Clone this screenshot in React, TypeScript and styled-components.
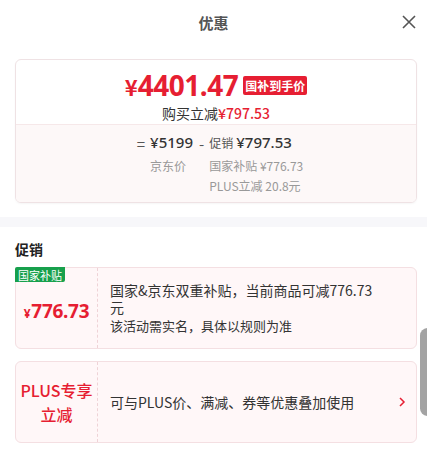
import styled, { createGlobalStyle } from 'styled-components';

const GlobalStyle = createGlobalStyle`
  body {
    margin: 0;
    background: #fff;
    font-family: 'Noto Sans CJK SC', 'Noto Sans', sans-serif;
    color: #333;
  }
`;

const RED = '#e61e32';

const Page = styled.div`
  position: relative;
  width: 427px;
  height: 454px;
  overflow: hidden;
  background: #fff;
`;

const Header = styled.div`
  display: grid;
  grid-template-columns: 1fr auto 1fr;
  align-items: center;
  height: 44px;
  margin-bottom: 15px;
`;

const Title = styled.div`
  grid-column: 2;
  font-size: 15px;
  font-weight: 700;
  color: #555;
`;

const CloseButton = styled.button`
  justify-self: end;
  margin-right: 10px;
  padding: 0;
  border: none;
  background: none;
  display: flex;
  color: #555;
`;

const PriceCard = styled.div`
  margin: 0 10px 0 15px;
  border: 1px solid #efe2e4;
  border-radius: 6px;
  overflow: hidden;
  box-shadow: 0 1px 2px rgba(0, 0, 0, 0.04);
`;

const PriceTop = styled.div`
  display: flex;
  flex-direction: column;
  align-items: center;
  height: 65px;
  padding-top: 7px;
  box-sizing: border-box;
  border-bottom: 1px solid #f6e8e9;
`;

const FinalPrice = styled.div`
  display: flex;
  align-items: center;
  gap: 5px;
  height: 36px;
  color: ${RED};
  font-weight: 700;
`;

const Yen = styled.span<{ $size: number }>`
  font-size: ${(p) => p.$size}px;
  font-weight: 700;
`;

const BigNumber = styled.span`
  font-family: 'Noto Sans', sans-serif;
  font-size: 28px;
  letter-spacing: -0.5px;
`;

const Badge = styled.span<{ $color: string }>`
  display: inline-flex;
  align-items: center;
  padding: 0 2px;
  height: 19px;
  border-radius: 2px;
  background: ${(p) => p.$color};
  color: #fff;
  font-size: 12px;
  font-weight: 700;
`;

const Saved = styled.div`
  font-size: 14px;
  line-height: 20px;
  color: #333;

  b {
    color: ${RED};
    font-weight: 500;
  }
`;

const Breakdown = styled.div`
  display: flex;
  justify-content: center;
  gap: 6px;
  height: 77px;
  padding: 7px 0 0 8px;
  box-sizing: border-box;
  background: #fdf8f8;
`;

const Term = styled.div`
  display: flex;
  gap: 5px;
`;

const Operator = styled.span`
  font-size: 15px;
  line-height: 24px;
  color: #555;
`;

const TermBody = styled.div`
  display: flex;
  flex-direction: column;
`;

const Amount = styled.div`
  display: flex;
  align-items: baseline;
  gap: 3px;
  height: 24px;
  color: #333;
  font-family: 'Noto Sans', 'Noto Sans CJK SC', sans-serif;
  font-size: 15px;
  font-weight: 500;
`;

const AmountLabel = styled.span`
  font-family: 'Noto Sans CJK SC', sans-serif;
  font-size: 12px;
  font-weight: 400;
  color: #555;
`;

const Note = styled.div`
  font-size: 12px;
  line-height: 20px;
  color: #999;
`;

const Band = styled.div`
  height: 10px;
  margin-top: 14px;
  background: #f7f7fa;
`;

const Section = styled.div`
  display: flex;
  flex-direction: column;
  gap: 12px;
  margin: 0 10px 0 15px;
`;

const SectionTitle = styled.div`
  height: 32px;
  margin-bottom: -4px;
  display: flex;
  align-items: flex-end;
  font-size: 14px;
  font-weight: 700;
  color: #222;
`;

const PromoCard = styled.div`
  position: relative;
  display: flex;
  height: 82px;
  border: 1px solid #f4dfe2;
  border-radius: 6px;
  background: #fff7f8;
  box-sizing: border-box;
`;

const PromoTag = styled(Badge)`
  position: absolute;
  top: -1px;
  left: -1px;
  height: 15px;
  padding: 0 3px;
  font-size: 11px;
  font-weight: 400;
  border-radius: 2px 0 2px 0;
`;

const PromoLeft = styled.div`
  display: flex;
  flex-direction: column;
  align-items: center;
  justify-content: center;
  width: 81px;
  flex-shrink: 0;
  border-right: 1px dashed #efd3d7;
  color: ${RED};
  text-align: center;
`;

const PromoValue = styled.div`
  display: flex;
  align-items: baseline;
  gap: 1px;
  margin-top: 6px;
  font-family: 'Noto Sans', sans-serif;
  font-size: 19px;
  font-weight: 700;
  letter-spacing: -0.3px;
`;

const PromoName = styled.div`
  font-size: 16px;
  font-weight: 500;
  line-height: 24px;
`;

const PromoBody = styled.div`
  flex: 1;
  display: flex;
  align-items: center;
  gap: 10px;
  padding: 0 10px 0 12px;
`;

const PromoText = styled.div`
  flex: 1;
  max-width: 272px;
  font-size: 14px;
  line-height: 17px;
  color: #333;
`;

const PromoSub = styled.div`
  font-size: 13px;
  line-height: 19px;
  color: #333;
`;

const Chevron = styled.span`
  display: flex;
  margin-left: auto;
  color: ${RED};
`;

const ScrollHandle = styled.div`
  position: absolute;
  top: 328px;
  right: -8px;
  width: 15px;
  height: 88px;
  border-radius: 8px;
  background: #a3a3a3;
`;

const App = () => {
  return (
    <Page>
      <GlobalStyle />
      <Header>
        <Title>优惠</Title>
        <CloseButton aria-label="关闭">
          <svg width="16" height="16" viewBox="0 0 16 16" fill="none">
            <path d="M2 2 L14 14 M14 2 L2 14" stroke="currentColor" strokeWidth="1.6" />
          </svg>
        </CloseButton>
      </Header>

      <PriceCard>
        <PriceTop>
          <FinalPrice>
            <span>
              <Yen $size={22}>¥</Yen>
              <BigNumber>4401.47</BigNumber>
            </span>
            <Badge $color={RED}>国补到手价</Badge>
          </FinalPrice>
          <Saved>
            购买立减<b>¥797.53</b>
          </Saved>
        </PriceTop>

        <Breakdown>
          <Term>
            <Operator>=</Operator>
            <TermBody>
              <Amount>¥5199</Amount>
              <Note>京东价</Note>
            </TermBody>
          </Term>
          <Term>
            <Operator>-</Operator>
            <TermBody>
              <Amount>
                <AmountLabel>促销</AmountLabel>¥797.53
              </Amount>
              <Note>国家补贴 ¥776.73</Note>
              <Note>PLUS立减 20.8元</Note>
            </TermBody>
          </Term>
        </Breakdown>
      </PriceCard>

      <Band />

      <Section>
        <SectionTitle>促销</SectionTitle>

        <PromoCard>
          <PromoTag $color="#17a04c">国家补贴</PromoTag>
          <PromoLeft>
            <PromoValue>
              <Yen $size={12}>¥</Yen>776.73
            </PromoValue>
          </PromoLeft>
          <PromoBody>
            <PromoText>
              国家&京东双重补贴，当前商品可减776.73元
              <PromoSub>该活动需实名，具体以规则为准</PromoSub>
            </PromoText>
          </PromoBody>
        </PromoCard>

        <PromoCard>
          <PromoLeft>
            <PromoName>PLUS专享</PromoName>
            <PromoName>立减</PromoName>
          </PromoLeft>
          <PromoBody>
            <PromoText>可与PLUS价、满减、券等优惠叠加使用</PromoText>
            <Chevron>
              <svg width="8" height="12" viewBox="0 0 8 12" fill="none">
                <path d="M2 2 L6 6 L2 10" stroke="currentColor" strokeWidth="1.5" />
              </svg>
            </Chevron>
          </PromoBody>
        </PromoCard>
      </Section>

      <ScrollHandle />
    </Page>
  );
};

export default App;
